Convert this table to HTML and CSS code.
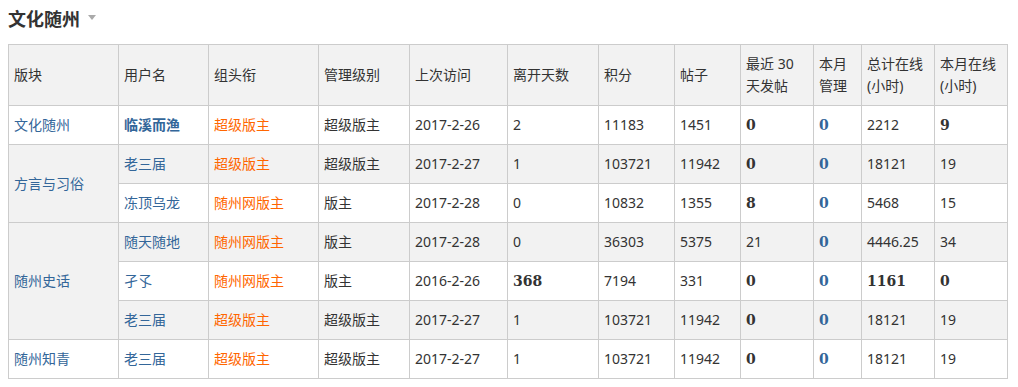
FILE: index.html
```html
<!DOCTYPE html>
<html lang="zh-CN">
<head>
<meta charset="utf-8">
<title>文化随州</title>
<link rel="stylesheet" href="styles.css">
</head>
<body>
<h2 class="title">文化随州<span class="caret"></span></h2>
<table class="stats">
  <colgroup>
    <col class="c110"><col class="c90"><col class="c110"><col class="c91"><col class="c98"><col class="c91"><col class="c76"><col class="c66"><col class="c73"><col class="c48"><col class="c73"><col class="c73">
  </colgroup>
  <thead>
    <tr>
      <th>版块</th><th>用户名</th><th>组头衔</th><th>管理级别</th><th>上次访问</th><th>离开天数</th><th>积分</th><th>帖子</th><th>最近 30 天发帖</th><th>本月管理</th><th>总计在线(小时)</th><th>本月在线(小时)</th>
    </tr>
  </thead>
  <tbody>
    <tr>
      <td class="forum">文化随州</td><td class="user strong">临溪而渔</td><td class="rank">超级版主</td><td>超级版主</td><td>2017-2-26</td><td>2</td><td>11183</td><td>1451</td><td><b class="num">0</b></td><td><b class="num blue">0</b></td><td>2212</td><td><b class="num">9</b></td>
    </tr>
    <tr class="alt">
      <td class="forum" rowspan="2">方言与习俗</td><td class="user">老三届</td><td class="rank">超级版主</td><td>超级版主</td><td>2017-2-27</td><td>1</td><td>103721</td><td>11942</td><td><b class="num">0</b></td><td><b class="num blue">0</b></td><td>18121</td><td>19</td>
    </tr>
    <tr>
      <td class="user">冻顶乌龙</td><td class="rank">随州网版主</td><td>版主</td><td>2017-2-28</td><td>0</td><td>10832</td><td>1355</td><td><b class="num">8</b></td><td><b class="num blue">0</b></td><td>5468</td><td>15</td>
    </tr>
    <tr class="alt">
      <td class="forum" rowspan="3">随州史话</td><td class="user">随天随地</td><td class="rank">随州网版主</td><td>版主</td><td>2017-2-28</td><td>0</td><td>36303</td><td>5375</td><td>21</td><td><b class="num blue">0</b></td><td>4446.25</td><td>34</td>
    </tr>
    <tr>
      <td class="user">孑孓</td><td class="rank">随州网版主</td><td>版主</td><td>2016-2-26</td><td><b class="num">368</b></td><td>7194</td><td>331</td><td><b class="num">0</b></td><td><b class="num blue">0</b></td><td><b class="num">1161</b></td><td><b class="num">0</b></td>
    </tr>
    <tr class="alt">
      <td class="user">老三届</td><td class="rank">超级版主</td><td>超级版主</td><td>2017-2-27</td><td>1</td><td>103721</td><td>11942</td><td><b class="num">0</b></td><td><b class="num blue">0</b></td><td>18121</td><td>19</td>
    </tr>
    <tr>
      <td class="forum">随州知青</td><td class="user">老三届</td><td class="rank">超级版主</td><td>超级版主</td><td>2017-2-27</td><td>1</td><td>103721</td><td>11942</td><td><b class="num">0</b></td><td><b class="num blue">0</b></td><td>18121</td><td>19</td>
    </tr>
  </tbody>
</table>
</body>
</html>
```
FILE: styles.css
```css
html, body {
  background: #fff;
}
body {
  margin: 8px;
  font-family: "Noto Sans", "Noto Sans CJK SC", sans-serif;
  font-size: 14px;
  color: #333;
}
.title {
  margin: 0 0 14px;
  font-size: 18px;
  line-height: 22px;
  font-weight: bold;
  color: #333;
  display: flex;
  align-items: center;
}
.caret {
  display: inline-block;
  width: 0;
  height: 0;
  margin-left: 8px;
  margin-top: -4px;
  border-left: 4.5px solid transparent;
  border-right: 4.5px solid transparent;
  border-top: 5px solid #aaa;
}
.stats {
  border-collapse: collapse;
  table-layout: fixed;
  width: 1000px;
}
.stats th, .stats td {
  border: 1px solid #ccc;
  padding: 8px 5px;
  line-height: 22px;
  text-align: left;
  vertical-align: middle;
  font-weight: normal;
}
.stats th {
  background: #f2f2f2;
}
.stats tr.alt td {
  background: #f2f2f2;
}
.c110 { width: 110px; }
.c90 { width: 90px; }
.c91 { width: 91px; }
.c98 { width: 98px; }
.c76 { width: 76px; }
.c66 { width: 66px; }
.c73 { width: 73px; }
.c48 { width: 48px; }
.forum, .user {
  color: #336699;
}
.user.strong {
  font-weight: bold;
}
.rank {
  color: #ff6600;
}
.num {
  font-family: "DejaVu Serif", serif;
  font-weight: bold;
  font-size: 14px;
  color: #333;
}
.num.blue {
  color: #336699;
}
```
